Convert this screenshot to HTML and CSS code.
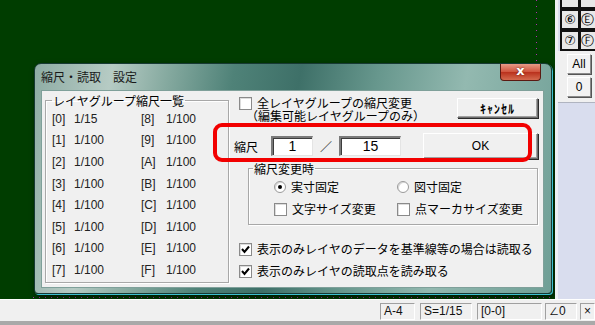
FILE: index.html
```html
<!DOCTYPE html>
<html lang="ja">
<head>
    <meta charset="UTF-8">
    <title>縮尺・読取 設定</title>
    <link rel="stylesheet" href="styles.css">
</head>
<body>

<div class="screen">
    <div class="canvas">
        <div class="dots-v"></div>
        <div class="dots-h"></div>

        <div class="dialog">
            <div class="title-bar">
                <span class="title">縮尺・読取　設定</span>
                <span class="close-btn">x</span>
            </div>

            <div class="client">
                <fieldset class="group scale-list">
                    <legend>レイヤグループ縮尺一覧</legend>
                    <div class="scale-grid">
                        <span>[0]</span><span>1/15</span><span>[8]</span><span>1/100</span>
                        <span>[1]</span><span>1/100</span><span>[9]</span><span>1/100</span>
                        <span>[2]</span><span>1/100</span><span>[A]</span><span>1/100</span>
                        <span>[3]</span><span>1/100</span><span>[B]</span><span>1/100</span>
                        <span>[4]</span><span>1/100</span><span>[C]</span><span>1/100</span>
                        <span>[5]</span><span>1/100</span><span>[D]</span><span>1/100</span>
                        <span>[6]</span><span>1/100</span><span>[E]</span><span>1/100</span>
                        <span>[7]</span><span>1/100</span><span>[F]</span><span>1/100</span>
                    </div>
                </fieldset>

                <div class="settings">
                    <div class="top-row">
                        <span class="check"></span>
                        <div class="top-text">
                            <div class="line">全レイヤグループの縮尺変更</div>
                            <div class="line sub">（編集可能レイヤグループのみ）</div>
                        </div>
                        <span class="btn cancel-btn">ｷｬﾝｾﾙ</span>
                    </div>

                    <div class="scale-row">
                        <span class="scale-label">縮尺</span>
                        <span class="field field-a">1</span>
                        <span class="slash">／</span>
                        <span class="field field-b">15</span>
                        <span class="btn ok-btn">OK</span>
                    </div>

                    <fieldset class="group change-group">
                        <legend>縮尺変更時</legend>
                        <div class="option-grid">
                            <label class="opt"><span class="radio on"></span>実寸固定</label>
                            <label class="opt"><span class="radio"></span>図寸固定</label>
                            <label class="opt"><span class="check"></span>文字サイズ変更</label>
                            <label class="opt"><span class="check"></span>点マーカサイズ変更</label>
                        </div>
                    </fieldset>

                    <label class="opt read-opt first">
                        <span class="check on"><svg viewBox="0 0 11 11" width="11" height="11"><polyline points="2,5 4.5,8 9,2.5" fill="none" stroke="#000" stroke-width="2"/></svg></span>表示のみレイヤのデータを基準線等の場合は読取る
                    </label>
                    <label class="opt read-opt">
                        <span class="check on"><svg viewBox="0 0 11 11" width="11" height="11"><polyline points="2,5 4.5,8 9,2.5" fill="none" stroke="#000" stroke-width="2"/></svg></span>表示のみレイヤの読取点を読み取る
                    </label>
                </div>
            </div>

            <!-- highlight drawn over the scale row -->
            <div class="highlight"></div>
        </div>
    </div>

    <div class="side">
        <div class="layer-btns">
            <span class="lbtn cut"></span><span class="lbtn cut"></span>
            <span class="lbtn">⑥</span><span class="lbtn">Ⓔ</span>
            <span class="lbtn">⑦</span><span class="lbtn">Ⓕ</span>
        </div>
        <div class="side-tools">
            <span class="sbtn">All</span>
            <span class="sbtn">0</span>
        </div>
        <div class="side-fill"></div>
    </div>

    <div class="status">
        <div class="status-fill"></div>
        <span class="panel p-a">A-4</span>
        <span class="panel p-s">S=1/15</span>
        <span class="panel p-g">[0-0]</span>
        <span class="panel p-ang">∠0</span>
        <span class="panel p-x">×</span>
    </div>
</div>

</body>
</html>
```

FILE: styles.css
```css
* {
    box-sizing: border-box;
}
body {
    margin: 0;
    width: 595px;
    height: 325px;
    overflow: hidden;
    font-family: "Liberation Sans", "Noto Sans CJK JP", sans-serif;
    font-size: 12px;
    color: #000;
    background: #f0f0f0;
}
.screen {
    display: grid;
    grid-template-columns: 555px 40px;
    grid-template-rows: 299px 26px;
    width: 595px;
    height: 325px;
}

/* drawing area */
.canvas {
    position: relative;
    background: #003d00;
    overflow: hidden;
}
.dots-v {
    position: absolute;
    left: 536px;
    top: 0;
    width: 1px;
    height: 62px;
    background: repeating-linear-gradient(to bottom, #b02cb0 0 1px, transparent 1px 6px);
}
.dots-h {
    position: absolute;
    left: 33px;
    right: 0;
    top: 297px;
    height: 1px;
    background: repeating-linear-gradient(to right, #b02cb0 0 1px, transparent 1px 6px);
}

/* dialog window */
.dialog {
    position: absolute;
    left: 34px;
    top: 63px;
    width: 518px;
    height: 231px;
    padding: 0 7px 6px 6px;
    border: 1px solid #173a34;
    border-radius: 7px 7px 4px 4px;
    background: linear-gradient(100deg, #8eaca4 0%, #b6cbc4 14%, #86aaa0 24%, #4f8278 36%, #3e7068 48%, #67978d 62%, #93b9b0 78%, #6f9f96 100%);
    box-shadow: 1px 1px 0 #3cc0d0, 2px 3px 6px rgba(0, 0, 0, 0.7);
}
.title-bar {
    position: relative;
    height: 26px;
    display: flex;
    align-items: center;
}
.title {
    font-family: "Noto Sans CJK JP", sans-serif;
    font-size: 12px;
    line-height: 14px;
    color: #1a1a1a;
}
.close-btn {
    position: absolute;
    right: 3px;
    top: 0;
    width: 41px;
    height: 17px;
    border: 1px solid #5a1a12;
    border-top: none;
    border-radius: 0 0 4px 4px;
    background: linear-gradient(#e79a86, #d0533c 50%, #b9301c 51%, #d46a4e);
    color: #fff;
    font-family: "DejaVu Sans", sans-serif;
    font-weight: bold;
    font-size: 13px;
    line-height: 14px;
    text-align: center;
    text-shadow: 0 0 2px #5a1a12;
}
.client {
    display: flex;
    height: 198px;
    background: #f0f0f0;
    border: 1px solid #7fa09a;
}

/* group boxes */
.group {
    margin: 0;
    border: 1px solid #a8a8a8;
    box-shadow: inset 1px 1px 0 #fff, 1px 1px 0 #fff;
    font-family: "Noto Sans CJK JP", sans-serif;
}
.group legend {
    padding: 0 1px;
    font-size: 12px;
    line-height: 13px;
}
.scale-list {
    margin: 3px 0 0 3px;
    padding: 0 0 0 6px;
    width: 184px;
    height: 189px;
}
.scale-grid {
    display: grid;
    grid-template-columns: 22px 67px 25px auto;
    grid-auto-rows: 21.6px;
    align-items: center;
    margin-top: 1px;
    font-family: "Liberation Sans", "Noto Sans CJK JP", sans-serif;
    font-size: 12px;
    color: #222;
}

/* right part */
.settings {
    margin-left: 4px;
    width: 306px;
    font-family: "Noto Sans CJK JP", sans-serif;
}
.top-row {
    display: flex;
    align-items: flex-start;
    margin-top: 5px;
    padding-left: 6px;
}
.top-text {
    margin-left: 5px;
    width: 200px;
}
.top-text .line {
    height: 13px;
    line-height: 13px;
    white-space: nowrap;
}
.top-text .sub {
    margin-left: -11px;
}
.check {
    display: inline-flex;
    align-items: center;
    justify-content: center;
    width: 13px;
    height: 13px;
    flex: none;
    background: #fff;
    border: 1px solid #8a8a8a;
    box-shadow: inset 1px 1px 0 #dcdcdc;
}
.top-row .check {
    margin-top: 1px;
}
.btn {
    display: flex;
    align-items: center;
    justify-content: center;
    background: #f0f0f0;
    border-top: 1px solid #fff;
    border-left: 1px solid #fff;
    border-right: 1px solid #6d6d6d;
    border-bottom: 1px solid #6d6d6d;
    box-shadow: 1px 1px 0 #2a2a2a, inset -1px -1px 0 #a0a0a0;
}
.cancel-btn {
    margin-top: 2px;
    width: 81px;
    height: 20px;
    font-weight: bold;
    font-size: 12px;
    letter-spacing: 1px;
}
.scale-row {
    display: flex;
    align-items: center;
    margin-top: 11px;
    padding-left: 1px;
    height: 26px;
}
.scale-label {
    width: 37px;
}
.field {
    height: 20px;
    background: #fff;
    border-top: 2px solid #7a7a7a;
    border-left: 2px solid #7a7a7a;
    border-right: 1px solid #e4e4e4;
    border-bottom: 1px solid #e4e4e4;
    box-shadow: inset 1px 1px 0 #3c3c3c;
    font-family: "Liberation Sans", sans-serif;
    font-size: 14px;
    line-height: 17px;
    text-align: center;
}
.field-a {
    width: 42px;
}
.slash {
    width: 26px;
    text-align: center;
    color: #333;
}
.field-b {
    width: 62px;
}
.ok-btn {
    margin-left: 22px;
    width: 115px;
    height: 26px;
    font-family: "Liberation Sans", sans-serif;
    font-size: 12px;
}
.change-group {
    margin: 3px 0 0 15px;
    padding: 0 0 0 4px;
    width: 290px;
    height: 63px;
}
.option-grid {
    display: grid;
    grid-template-columns: 123px auto;
    grid-auto-rows: 22px;
    align-items: center;
    margin-top: 1px;
    padding-left: 21px;
}
.opt {
    display: flex;
    align-items: center;
    line-height: 14px;
}
.opt .check,
.opt .radio {
    margin-right: 5px;
}
.radio {
    position: relative;
    width: 12px;
    height: 12px;
    flex: none;
    border-radius: 50%;
    background: #fff;
    border: 1px solid #9a9a9a;
    box-shadow: inset 1px 1px 0 #d8d8d8;
}
.radio.on::after {
    content: "";
    position: absolute;
    left: 3px;
    top: 3px;
    width: 4px;
    height: 4px;
    border-radius: 50%;
    background: #000;
}
.read-opt {
    padding-left: 6px;
    height: 16px;
}
.read-opt.first {
    margin-top: 16px;
    margin-bottom: 6px;
}

/* red annotation over the scale row */
.highlight {
    position: absolute;
    left: 178px;
    top: 59px;
    width: 319px;
    height: 39px;
    border: 4px solid #f20000;
    border-radius: 9px;
}

/* right toolbar */
.side {
    display: flex;
    flex-direction: column;
    border-left: 3px solid #eef0f4;
    background: #d9ddee;
}
.layer-btns {
    display: grid;
    grid-template-columns: 19px 16px;
    grid-template-rows: 9px 21px 21px;
    margin-left: 2px;
    background: #f0f0f0;
}
.lbtn {
    display: flex;
    align-items: center;
    justify-content: center;
    border: 2px solid #111;
    border-right-width: 1px;
    background: #e8e8e8;
    font-family: "DejaVu Sans", sans-serif;
    font-size: 13px;
    line-height: 15px;
}
.lbtn + .lbtn:nth-child(even) {
    justify-content: flex-start;
    border-right: none;
}
.lbtn.cut {
    border-top: none;
}
.side-tools {
    display: flex;
    flex-direction: column;
    gap: 3px;
    height: 52px;
    padding: 3px 0 0 9px;
    background: #f0f0f0;
    border-bottom: 1px solid #b0b4c0;
}
.sbtn {
    display: flex;
    align-items: center;
    justify-content: center;
    width: 24px;
    height: 20px;
    background: #f2f2f2;
    border-top: 1px solid #fff;
    border-left: 1px solid #fff;
    border-right: 1px solid #8a8a8a;
    border-bottom: 1px solid #8a8a8a;
    box-shadow: 1px 1px 0 #555;
    font-size: 12px;
}
.side-fill {
    flex: 1;
}

/* status bar */
.status {
    grid-column: 1 / 3;
    display: flex;
    align-items: flex-start;
    padding-top: 3px;
    background: #f0f0f0;
    border-top: 1px solid #fff;
    border-bottom: 4px solid #a9a9a9;
}
.status-fill {
    flex: 1;
}
.panel {
    height: 17px;
    padding-left: 3px;
    border-top: 1px solid #a0a0a0;
    border-left: 1px solid #a0a0a0;
    border-right: 1px solid #fff;
    border-bottom: 1px solid #fff;
    font-family: "Liberation Sans", sans-serif;
    font-size: 12px;
    line-height: 15px;
    color: #111;
}
.p-a {
    width: 35px;
}
.p-s {
    width: 52px;
    margin-left: 5px;
}
.p-g {
    width: 65px;
    margin-left: 5px;
}
.p-ang {
    width: 32px;
    margin-left: 3px;
}
.p-x {
    width: 15px;
    margin-left: 3px;
}
```
